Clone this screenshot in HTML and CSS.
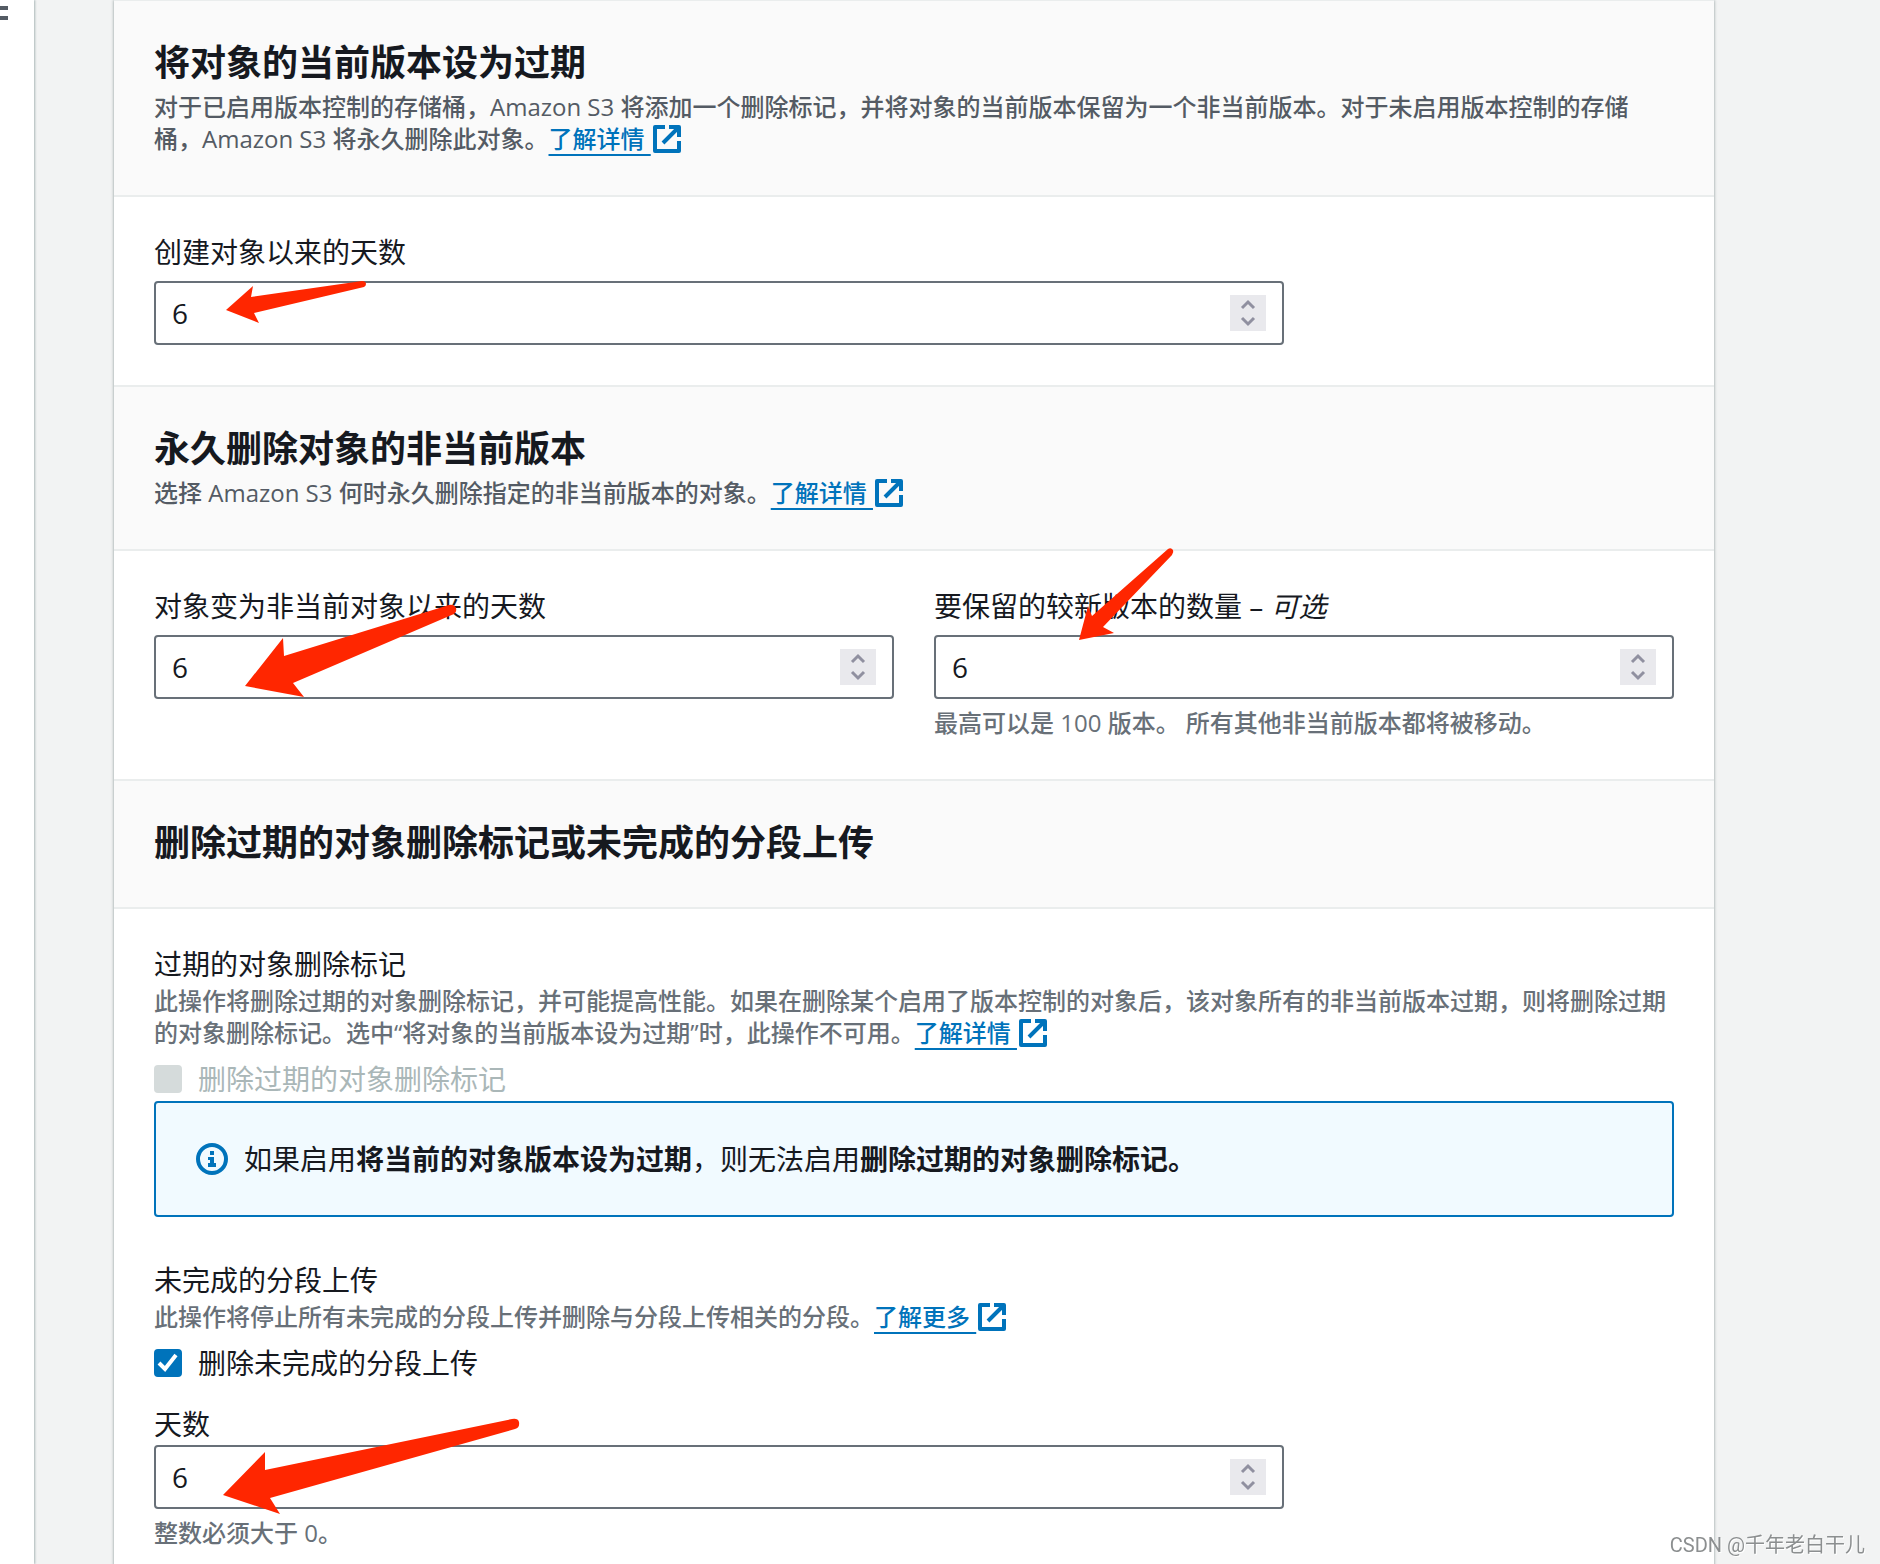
FILE: index.html
```html
<!DOCTYPE html>
<html lang="zh-CN">
<head>
    <meta charset="utf-8">
    <meta name="viewport" content="width=device-width, initial-scale=1">
    <link rel="stylesheet" href="styles.css">
    <title>生命周期规则 - Amazon S3</title>
</head>
<body>

    <svg class="sprite" aria-hidden="true">
      <symbol id="external" viewBox="0 0 28 28">
        <path d="M12 2H2V26H26V16M16 2H26V12M25 3L10 18" fill="none" stroke="currentColor" stroke-width="4" stroke-linejoin="round"/>
      </symbol>
      <symbol id="spinner" viewBox="0 0 36 36">
        <path d="M12 13L18 7L24 13M12 23L18 29L24 23" fill="none" stroke="currentColor" stroke-width="3"/>
      </symbol>
    </svg>

    <div class="layout">
      <aside class="sidebar">
        <button type="button" class="menu-button" aria-label="打开导航">
          <svg width="8" height="14" viewBox="0 0 8 14"><path d="M0 0H8V4H0ZM0 10H8V14H0Z" fill="currentColor"/></svg>
        </button>
      </aside>

      <main class="content">
        <form class="card">
          <header class="card-header">
            <h2>将对象的当前版本设为过期</h2>
            <p class="description">对于已启用版本控制的存储桶，Amazon S3 将添加一个删除标记，并将对象的当前版本保留为一个非当前版本。对于未启用版本控制的存储桶，Amazon S3 将永久删除此对象。<a href="#"><span>了解详情&nbsp;</span><svg class="external"><use href="#external"/></svg></a></p>
          </header>
          <section class="card-body">
            <div class="field narrow">
              <label for="currentDays">创建对象以来的天数</label>
              <div class="number">
                <input type="number" id="currentDays" value="6">
                <svg class="spinner"><use href="#spinner"/></svg>
                <svg class="arrow"><path d="M72 29L99 5L97 16L208 0Q212 0 212 3Q212 5 210 6L100 32L105 42Z"/></svg>
              </div>
            </div>
          </section>

          <header class="card-header">
            <h2>永久删除对象的非当前版本</h2>
            <p class="description">选择 Amazon S3 何时永久删除指定的非当前版本的对象。<a href="#"><span>了解详情&nbsp;</span><svg class="external"><use href="#external"/></svg></a></p>
          </header>
          <section class="card-body columns">
            <div class="field">
              <label for="noncurrentDays">对象变为非当前对象以来的天数</label>
              <div class="number">
                <input type="number" id="noncurrentDays" value="6">
                <svg class="spinner"><use href="#spinner"/></svg>
                <svg class="arrow"><path d="M91 51L129 3L130 21L295 -30Q300 -31 302 -27Q303 -23 300 -21L139 48L150 62Z"/></svg>
              </div>
            </div>
            <div class="field">
              <label for="newerVersions">要保留的较新版本的数量 – <i>可选</i></label>
              <div class="number">
                <input type="number" id="newerVersions" value="6">
                <svg class="spinner"><use href="#spinner"/></svg>
                <svg class="arrow"><path d="M145 5L154 -29L158 -19L234 -86Q237 -88 239 -85Q240 -83 238 -80L169 -8L180 -2Z"/></svg>
              </div>
              <p class="hint">最高可以是 100 版本。 所有其他非当前版本都将被移动。</p>
            </div>
          </section>

          <header class="card-header">
            <h2>删除过期的对象删除标记或未完成的分段上传</h2>
          </header>
          <section class="card-body">
            <div class="group">
              <h3>过期的对象删除标记</h3>
              <p class="description">此操作将删除过期的对象删除标记，并可能提高性能。如果在删除某个启用了版本控制的对象后，该对象所有的非当前版本过期，则将删除过期的对象删除标记。选中“将对象的当前版本设为过期”时，此操作不可用。<a href="#"><span>了解详情&nbsp;</span><svg class="external"><use href="#external"/></svg></a></p>
              <div class="checkbox">
                <input type="checkbox" id="deleteMarkers" disabled>
                <label for="deleteMarkers">删除过期的对象删除标记</label>
              </div>
              <div class="alert">
                <svg class="info" width="32" height="32" viewBox="0 0 32 32">
                  <circle cx="16" cy="16" r="14" fill="none" stroke="currentColor" stroke-width="4"/>
                  <path d="M14 8H18V12H14ZM12 14H18V20H20V24H12V20H14V17H12Z" fill="currentColor"/>
                </svg>
                <p>如果启用<b>将当前的对象版本设为过期</b>，则无法启用<b>删除过期的对象删除标记。</b></p>
              </div>
            </div>

            <div class="group">
              <h3>未完成的分段上传</h3>
              <p class="description">此操作将停止所有未完成的分段上传并删除与分段上传相关的分段。<a href="#"><span>了解更多&nbsp;</span><svg class="external"><use href="#external"/></svg></a></p>
              <div class="checkbox">
                <input type="checkbox" id="deleteUploads" checked>
                <label for="deleteUploads">删除未完成的分段上传</label>
              </div>
              <div class="field narrow nested">
                <label for="uploadDays">天数</label>
                <div class="number">
                  <input type="number" id="uploadDays" value="6">
                  <svg class="spinner"><use href="#spinner"/></svg>
                  <svg class="arrow"><path d="M69 50L111 7L111 25L358 -26Q364 -27 365 -23Q366 -17 361 -16L116 53L126 69Z"/></svg>
                </div>
                <p class="hint">整数必须大于 0。</p>
              </div>
            </div>
          </section>
        </form>
      </main>
    </div>

    <div class="watermark">CSDN @千年老白干儿</div>

</body>
</html>
```
FILE: styles.css
```css
:root {
  --text: #16191f;
  --muted: #687078;
  --dark-muted: #545b64;
  --blue: #0073bb;
  --line: #eaeded;
}

* {
  box-sizing: border-box;
  margin: 0;
  padding: 0;
}

body {
  background-color: #f2f3f3;
  color: var(--text);
  font-family: "Open Sans", "Noto Sans CJK SC", sans-serif;
  font-size: 28px;
  line-height: 32px;
}

.sprite {
  display: none;
}

.layout {
  display: flex;
  height: 100vh;
  overflow: hidden;
}

/* collapsed navigation */
.sidebar {
  background-color: #fff;
  box-shadow: 1px 0 2px #aab7b8;
  flex: 0 0 34px;
}

.menu-button {
  background: none;
  border: none;
  color: var(--dark-muted);
  display: block;
  padding: 6px 0;
}

.menu-button svg {
  display: block;
}

.content {
  flex: 1;
  padding: 0 166px 0 80px;
}

/* card */
.card {
  background-color: #fff;
  border-top: 1px solid var(--line);
  box-shadow: 0 0 3px #879596;
  min-height: 100%;
}

.card-header {
  background-color: #fafafa;
  border-bottom: 2px solid var(--line);
  padding: 40px;
}

.card-body + .card-header {
  border-top: 2px solid var(--line);
}

.card-body {
  padding: 40px;
}

.columns {
  display: grid;
  gap: 40px;
  grid-template-columns: 1fr 1fr;
}

h2 {
  font-size: 36px;
  line-height: 44px;
  padding-bottom: 2px;
}

h3 {
  font-size: 28px;
  font-weight: normal;
  line-height: 30px;
  padding-bottom: 2px;
}

.description, .hint {
  color: var(--muted);
  font-size: 24px;
  font-weight: 500;
}

.description {
  padding-top: 4px;
}

.card-header .description {
  color: var(--dark-muted);
}

a {
  color: var(--blue);
  text-decoration: none;
  white-space: nowrap;
}

a span {
  text-decoration: underline 2px;
  text-decoration-skip-ink: none;
  text-underline-offset: 6px;
}

.external {
  height: 28px;
  margin: 2px 0 0 2px;
  vertical-align: top;
  width: 28px;
}

/* form fields */
.narrow {
  width: calc(75% - 10px);
}

.field label {
  display: block;
  line-height: 30px;
  margin-bottom: 14px;
}

.nested {
  margin-top: 32px;
}

.nested label {
  margin-bottom: 6px;
}

.number {
  align-items: center;
  border: 2px solid var(--muted);
  border-radius: 4px;
  display: flex;
  height: 64px;
  padding: 0 16px;
  position: relative;
}

.number input {
  appearance: textfield;
  background: none;
  border: none;
  color: inherit;
  flex: 1;
  font: inherit;
  font-weight: 500;
  min-width: 0;
  outline: none;
}

.number input::-webkit-inner-spin-button {
  display: none;
}

.spinner {
  background-color: #e9e9ed;
  color: #9090a0;
  height: 36px;
  width: 36px;
}

.arrow {
  fill: #ff2600;
  height: 64px;
  left: -2px;
  overflow: visible;
  pointer-events: none;
  position: absolute;
  top: -2px;
  width: 100%;
  z-index: 1;
}

.hint {
  margin-top: 8px;
}

.group + .group {
  margin-top: 48px;
}

.checkbox {
  align-items: center;
  display: flex;
  gap: 16px;
  height: 28px;
  margin: 16px 0 8px;
}

.checkbox input {
  appearance: none;
  background: #fff center / 28px no-repeat;
  border: 2px solid var(--muted);
  border-radius: 4px;
  height: 28px;
  width: 28px;
}

.checkbox input:checked {
  background-color: var(--blue);
  background-image: url("data:image/svg+xml,%3Csvg xmlns='http://www.w3.org/2000/svg' viewBox='0 0 28 28'%3E%3Cpath d='M5 14L11 20L22 6' fill='none' stroke='white' stroke-width='4'/%3E%3C/svg%3E");
  border-color: var(--blue);
}

.checkbox input:disabled {
  background-color: #d5dbdb;
  border-color: #d5dbdb;
}

.checkbox input:disabled + label {
  color: #aab7b8;
}

.alert {
  align-items: center;
  background-color: #f1faff;
  border: 2px solid var(--blue);
  border-radius: 4px;
  display: flex;
  gap: 16px;
  padding: 40px;
}

.info {
  color: var(--blue);
  flex: none;
}

.watermark {
  bottom: 3px;
  color: #8c8f90;
  font-family: Roboto, "Noto Sans CJK SC", sans-serif;
  font-size: 20px;
  position: fixed;
  right: 15px;
  text-shadow: 1px 1px #fff;
}
```
